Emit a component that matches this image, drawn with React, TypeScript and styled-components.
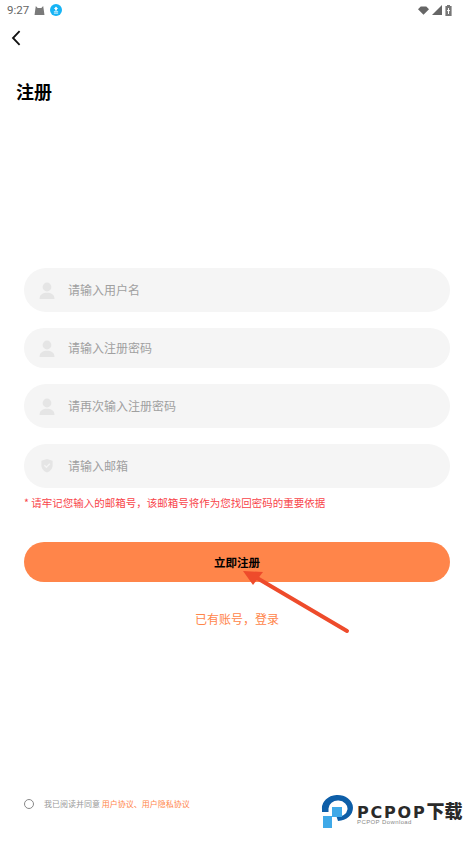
import React from "react";
import styled, { createGlobalStyle } from "styled-components";

const GlobalStyle = createGlobalStyle`
  html, body {
    margin: 0;
    padding: 0;
    background: #fff;
  }
  body {
    font-family: "Noto Sans CJK SC", "Liberation Sans", sans-serif;
  }
`;

const fields = [
  { label: "请输入用户名", height: 44, gap: 16, icon: "user" },
  { label: "请输入注册密码", height: 40, gap: 16, icon: "user" },
  { label: "请再次输入注册密码", height: 44, gap: 16, icon: "user" },
  { label: "请输入邮箱", height: 44, gap: 0, icon: "shield" },
];

const UserIcon = () => (
  <FieldIcon viewBox="0 0 16 18">
    <circle cx="8" cy="5" r="4.4" fill="#e5e5e5" />
    <path d="M0.5 17 C0.5 12.5 4 10.8 8 10.8 C12 10.8 15.5 12.5 15.5 17 Z" fill="#e5e5e5" />
  </FieldIcon>
);

const ShieldIcon = () => (
  <FieldIcon viewBox="0 1.5 16 18">
    <path d="M8 2.4 L13.6 4.2 V9 C13.6 12.4 11 14.8 8 16 C5 14.8 2.4 12.4 2.4 9 V4.2 Z" fill="#e5e5e5" />
    <path d="M5.4 8.8 L7.4 10.8 L10.8 7.2" fill="none" stroke="#f4f4f4" strokeWidth="1.3" />
  </FieldIcon>
);

export default function App() {
  return (
    <Page>
      <GlobalStyle />
      <StatusBar>
        <StatusLeft>
          <Time>9:27</Time>
          <svg width="11" height="11" viewBox="0 0 12 12">
            <path d="M2 1 L4 3.4 H8 L10 1 L10.6 5 L11.4 11 H0.6 L1.4 5 Z" fill="#7a7a7a" />
          </svg>
          <svg width="12" height="12" viewBox="0 0 13 13">
            <circle cx="6.5" cy="6.5" r="6.5" fill="#17b4f5" />
            <path d="M6.5 2.8 L8.8 5.4 H7.5 V7 H5.5 V5.4 H4.2 Z" fill="#fff" />
            <rect x="4.2" y="8" width="4.6" height="0.9" fill="#fff" />
            <rect x="4.2" y="9.5" width="4.6" height="0.8" fill="#fff" />
          </svg>
        </StatusLeft>
        <StatusRight>
          <svg width="11" height="9" viewBox="0 0 12 9">
            <path d="M0 3 L3 0 H9 L12 3 L6 9 Z" fill="#666" />
          </svg>
          <svg width="10" height="10" viewBox="0 0 10 10">
            <path d="M10 0 V10 H0 Z" fill="#666" />
          </svg>
          <svg width="7" height="11" viewBox="0 0 7 11">
            <rect x="2" y="0" width="3" height="1.2" fill="#777" />
            <rect x="0.4" y="1" width="6.2" height="10" fill="#777" />
            <path d="M3.5 3 V9 M2 5.6 H5" stroke="#fff" strokeWidth="1" />
          </svg>
        </StatusRight>
      </StatusBar>

      <BackButton>
        <svg width="10" height="16" viewBox="0 0 10 16">
          <path d="M8.6 1.2 L2 8 L8.6 14.8" fill="none" stroke="#111" strokeWidth="1.8" />
        </svg>
      </BackButton>

      <Title>注册</Title>

      <Form>
        {fields.map((f) => (
          <Field key={f.label} $height={f.height} $gap={f.gap}>
            {f.icon === "user" ? <UserIcon /> : <ShieldIcon />}
            <Placeholder>{f.label}</Placeholder>
          </Field>
        ))}
        <Warning>* 请牢记您输入的邮箱号，该邮箱号将作为您找回密码的重要依据</Warning>
        <SubmitButton>立即注册</SubmitButton>
        <LoginLink>已有账号，登录</LoginLink>
      </Form>

      <Agreement>
        <Radio />
        <AgreementText>
          我已阅读并同意 <em>用户协议、用户隐私协议</em>
        </AgreementText>
      </Agreement>

      <Arrow width="120" height="80" viewBox="0 0 120 80">
        <path d="M104 68 L14 15" stroke="#ee4b2b" strokeWidth="4" strokeLinecap="round" />
        <path d="M0 8 L20 9 L10 22 Z" fill="#ee4b2b" />
      </Arrow>

      <Watermark>
        <svg width="34" height="36" viewBox="0 0 34 36">
          <path
            d="M1 16 A15.5 13 0 1 1 17 28 L15.5 23.5 A9.5 8 0 1 0 7.5 15.5 V19 H1 Z"
            fill="#0d5ea8"
          />
          <rect x="11" y="14" width="10" height="10" fill="#3fa9e8" />
          <rect x="2" y="23" width="9" height="12" fill="#3fa9e8" />
        </svg>
        <WatermarkText>
          <Brand>
            <Latin>PCPOP</Latin>下载
          </Brand>
          <BrandSub>PCPOP Download</BrandSub>
        </WatermarkText>
      </Watermark>
    </Page>
  );
}

const Page = styled.div`
  position: relative;
  width: 474px;
  height: 843px;
  overflow: hidden;
  background: #fff;
`;

const StatusBar = styled.div`
  height: 20px;
  padding: 0 22px 0 7px;
  display: flex;
  justify-content: space-between;
  align-items: center;
`;

const StatusLeft = styled.div`
  display: flex;
  align-items: center;
  gap: 5px;
`;

const StatusRight = styled.div`
  display: flex;
  align-items: center;
  gap: 3px;
`;

const Time = styled.span`
  font-family: Roboto, "Liberation Sans", sans-serif;
  font-size: 11.5px;
  color: #666;
  margin-right: 0;
`;

const BackButton = styled.div`
  height: 16px;
  margin-top: 10px;
  padding-left: 11px;
  line-height: 0;
`;

const Title = styled.h1`
  margin: 32px 0 0 16px;
  font-size: 18px;
  line-height: 26px;
  font-weight: 700;
  color: #000;
`;

const Form = styled.div`
  margin-top: 164px;
  padding: 0 24px;
  display: flex;
  flex-direction: column;
`;

const Field = styled.div<{ $height: number; $gap: number }>`
  height: ${(p) => p.$height}px;
  margin-bottom: ${(p) => p.$gap}px;
  padding: 0 0 2px 15px;
  box-sizing: border-box;
  display: flex;
  align-items: center;
  background: #f5f5f5;
  border-radius: 22px;
`;

const FieldIcon = styled.svg`
  width: 16px;
  height: 18px;
  margin: 4px 13px 0 0;
  flex: none;
`;

const Placeholder = styled.span`
  font-size: 12px;
  color: #a0a0a0;
`;

const Warning = styled.div`
  margin-top: 7px;
  font-size: 10.5px;
  line-height: 16px;
  color: #f8444a;
`;

const SubmitButton = styled.div`
  margin-top: 31px;
  height: 40px;
  border-radius: 20px;
  background: #ff854a;
  display: flex;
  align-items: center;
  justify-content: center;
  font-size: 11.5px;
  font-weight: 700;
  color: #000;
`;

const LoginLink = styled.div`
  margin-top: 28px;
  text-align: center;
  font-size: 12px;
  line-height: 18px;
  color: #ff854a;
`;

const Agreement = styled.div`
  margin-top: 170px;
  padding-left: 24px;
  display: flex;
  align-items: center;
  gap: 10px;
`;

const Radio = styled.span`
  width: 8px;
  height: 8px;
  border: 1px solid #888;
  border-radius: 50%;
  flex: none;
`;

const AgreementText = styled.span`
  font-size: 8px;
  line-height: 12px;
  color: #999;

  em {
    font-style: normal;
    color: #ff854a;
  }
`;

const Arrow = styled.svg`
  position: absolute;
  left: 243px;
  top: 563px;
`;

const Watermark = styled.div`
  position: absolute;
  left: 321px;
  top: 793px;
  display: flex;
  align-items: flex-start;
  gap: 2px;
`;

const WatermarkText = styled.div`
  margin-top: 9px;
  display: flex;
  flex-direction: column;
`;

const Brand = styled.div`
  font-family: "Noto Sans CJK SC", sans-serif;
  font-size: 18px;
  line-height: 16px;
  height: 16px;
  font-weight: 900;
  color: #2a2a2a;
  white-space: nowrap;
`;

const Latin = styled.span`
  font-family: "DejaVu Sans", sans-serif;
  font-size: 16px;
  font-weight: 700;
  letter-spacing: 1.8px;
`;

const BrandSub = styled.div`
  margin-top: 1px;
  font-family: "Liberation Sans", sans-serif;
  font-size: 6px;
  line-height: 7px;
  letter-spacing: 0.4px;
  color: #888;
`;
